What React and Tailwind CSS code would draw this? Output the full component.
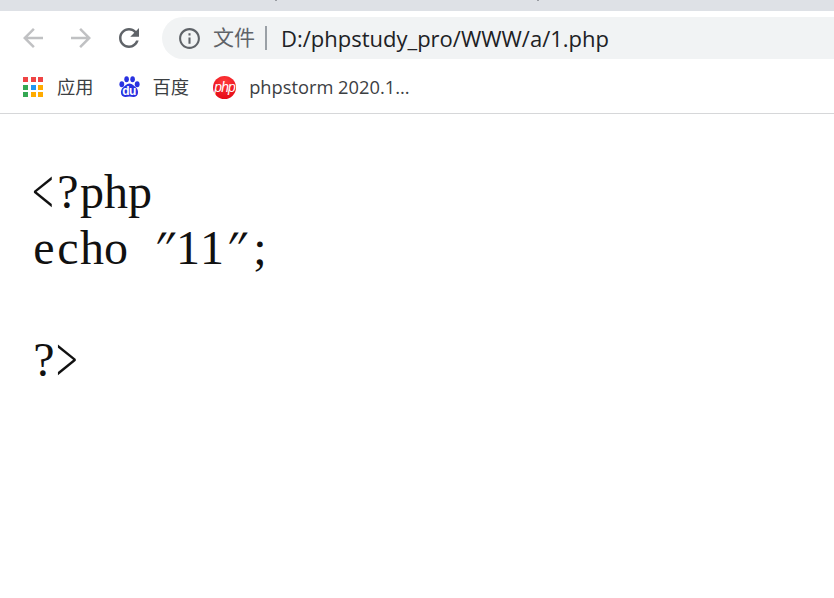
import React from 'react';

const uiFont = "font-['Open_Sans','Noto_Sans_CJK_SC',sans-serif]";

function Arrow({ flip }) {
  return (
    <svg width="30" height="30" viewBox="0 0 24 24" fill="#c0c1c3" className={flip ? 'rotate-180' : ''}>
      <path d="M20 11H7.83l5.59-5.59L12 4l-8 8 8 8 1.41-1.41L7.83 13H20v-2z" />
    </svg>
  );
}

function AppsIcon() {
  const colors = ['#ef4444', '#ef4444', '#ef4444', '#34a853', '#2196f3', '#ffab00', '#34a853', '#ffab00', '#ffab00'];
  return (
    <div className="grid grid-cols-3 gap-[2.5px] w-[20px]">
      {colors.map((c, i) => (
        <span key={i} className="w-[5px] h-[5px]" style={{ backgroundColor: c }} />
      ))}
    </div>
  );
}

function BaiduIcon() {
  return (
    <div className="relative w-[21px] h-[22px]">
      <svg width="21" height="22" viewBox="0 0 21 22" fill="#2932e1">
        <ellipse cx="2.8" cy="8.2" rx="2.4" ry="3" />
        <ellipse cx="7.6" cy="3.2" rx="2.3" ry="3" />
        <ellipse cx="13.6" cy="3.2" rx="2.3" ry="3" />
        <ellipse cx="18.2" cy="8.2" rx="2.4" ry="3" />
        <path d="M10.5 7.500c3 0 4.500 2.500 6.500 4 3 2.300 3 9-2 9.500-1.500.2-3.200-.5-4.500-.5s-3 .7-4.500.5c-5-.5-5-7.200-2-9.500 2-1.500 3.500-4 6.500-4z" />
      </svg>
      <span className="absolute left-0 right-0 top-[9px] text-center text-[12px] leading-[12px] font-bold tracking-[-0.5px] text-white font-['Liberation_Sans',sans-serif]">du</span>
    </div>
  );
}

function PhpIcon() {
  return (
    <div className="w-[23px] h-[23px] rounded-full bg-[radial-gradient(circle_at_50%_25%,#ff3a3a,#e00010)] flex items-center justify-center">
      <span className="text-white italic text-[14px] leading-none tracking-[-0.8px] font-['Liberation_Sans',sans-serif]">php</span>
    </div>
  );
}

// SimSun style half width cells, every char takes 24px
const cellStyles = {
  '<': 'text-[64px] leading-[40px] scale-x-[0.6] origin-left translate-y-[5px]',
  '>': 'text-[64px] leading-[40px] scale-x-[0.6] origin-left translate-y-[5px]',
  '"': '-skew-x-[30deg] -translate-x-[4px]',
};

function CodeLine({ text }) {
  return (
    <div className="h-[56px] whitespace-pre">
      {text.split('').map((ch, i) => (
        <span key={i} className={`inline-block w-[24px] text-center ${cellStyles[ch] || ''}`}>{ch}</span>
      ))}
    </div>
  );
}

export default function App() {
  return (
    <div className="w-[834px] h-[598px] bg-white overflow-hidden">
      <div className="h-[11px] bg-[#dee1e6] flex items-start pl-[275px]">
        <span className="w-[2px] h-[1px] bg-[#9a9da3]" />
        <span className="w-[2px] h-[1px] bg-[#9a9da3] ml-[260px]" />
      </div>

      {/* toolbar */}
      <div className="h-[54px] flex items-center pl-[18px]">
        <Arrow />
        <div className="ml-[18px]"><Arrow flip /></div>
        <svg width="30" height="30" viewBox="0 0 24 24" fill="#5f6368" className="ml-[18px]">
          <path d="M17.65 6.35C16.2 4.9 14.21 4 12 4c-4.42 0-7.99 3.58-7.99 8s3.57 8 7.99 8c3.730 0 6.840-2.550 7.730-6h-2.080c-.82 2.330-3.040 4-5.650 4-3.310 0-6-2.690-6-6s2.690-6 6-6c1.660 0 3.140.69 4.220 1.780L13 11h7V4l-2.350 2.350z" />
        </svg>
        <div className={`ml-[18px] flex-1 h-[42px] bg-[#f1f3f4] rounded-l-[21px] flex items-center pl-[15px] ${uiFont}`}>
          <svg width="25" height="25" viewBox="0 0 24 24" fill="#5f6368">
            <path d="M11 7h2v2h-2zm0 4h2v6h-2zm1-9C6.480 2 2 6.480 2 12s4.480 10 10 10 10-4.480 10-10S17.520 2 12 2zm0 18c-4.410 0-8-3.590-8-8s3.590-8 8-8 8 3.590 8 8-3.590 8-8 8z" />
          </svg>
          <span className="ml-[11px] text-[21px] text-[#5f6368]">文件</span>
          <span className="ml-[10px] w-[2px] h-[24px] bg-[#9aa0a6]" />
          <span className="ml-[14px] text-[22px] text-[#202124]">D:/phpstudy_pro/WWW/a/1.php</span>
        </div>
      </div>

      {/* bookmarks */}
      <div className={`h-[49px] flex items-center border-b border-[#d6d7d9] text-[#3c4043] text-[18.3px] pl-[23px] pb-[4px] ${uiFont}`}>
        <AppsIcon />
        <span className="ml-[14px]">应用</span>
        <div className="ml-[25px]"><BaiduIcon /></div>
        <span className="ml-[13px]">百度</span>
        <div className="ml-[24px]"><PhpIcon /></div>
        <span className="ml-[13px]">phpstorm 2020.1...</span>
      </div>

      {/* page body, raw php shown as text */}
      <div className="pl-[32px] pt-[50px] text-[48px] leading-[56px] text-[#111] font-['Liberation_Serif','Noto_Sans_CJK_SC',serif]">
        <CodeLine text="<?php" />
        <CodeLine text={'echo "11";'} />
        <CodeLine text=" " />
        <CodeLine text="?>" />
      </div>
    </div>
  );
}
